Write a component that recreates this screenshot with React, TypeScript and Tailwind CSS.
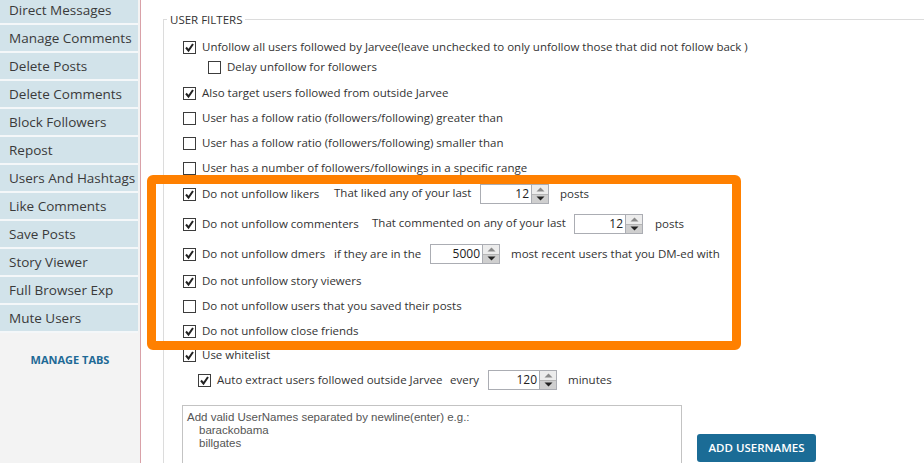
import React from "react";

const tabs = [
  "Direct Messages",
  "Manage Comments",
  "Delete Posts",
  "Delete Comments",
  "Block Followers",
  "Repost",
  "Users And Hashtags",
  "Like Comments",
  "Save Posts",
  "Story Viewer",
  "Full Browser Exp",
  "Mute Users",
];

function Check({ checked }: { checked?: boolean }) {
  return (
    <span className="flex h-[13px] w-[13px] shrink-0 items-center justify-center border border-[#3c3c3c] bg-white">
      {checked && (
        <svg width="11" height="11" viewBox="0 0 11 11">
          <path d="M2 5.5 L4.5 8.5 L9 2" fill="none" stroke="#222" strokeWidth="2" />
        </svg>
      )}
    </span>
  );
}

function CheckRow({
  checked,
  label,
  className = "",
  children,
  labelWidth,
}: {
  checked?: boolean;
  label: string;
  className?: string;
  children?: React.ReactNode;
  labelWidth?: string;
}) {
  return (
    <div className={`flex h-[20px] items-center ${className}`}>
      <div className={`flex shrink-0 items-center gap-[6px] ${labelWidth ?? ""}`}>
        <Check checked={checked} />
        <span className="whitespace-nowrap">{label}</span>
      </div>
      {children}
    </div>
  );
}

function Spin({ value, w = "w-[52px]" }: { value: string; w?: string }) {
  return (
    <div className="flex h-[20px] shrink-0 items-stretch">
      <div className={`${w} flex items-center justify-end border border-[#abadb3] bg-white pr-[2px] text-[12px] text-[#222]`}>
        {value}
      </div>
      <div className="flex w-[17px] flex-col border border-l-0 border-[#abadb3]">
        <div className="flex flex-1 items-center justify-center border-b border-[#b5b5b5] bg-[#ececec]">
          <svg width="9" height="5" viewBox="0 0 9 5">
            <path d="M0.5 4.5 L4.5 0.5 L8.5 4.5 Z" fill="#8a8a8a" />
          </svg>
        </div>
        <div className="flex flex-1 items-center justify-center bg-[#cfcfcf]">
          <svg width="9" height="5" viewBox="0 0 9 5">
            <path d="M0.5 0.5 L4.5 4.5 L8.5 0.5 Z" fill="#222" />
          </svg>
        </div>
      </div>
    </div>
  );
}

export default function App() {
  return (
    <div className="relative flex h-[463px] w-[924px] overflow-hidden bg-white font-['Open_Sans',sans-serif] text-[#333]">
      {/* sidebar */}
      <aside className="flex w-[141px] shrink-0 flex-col border-r border-[#d9a1a8] bg-[#f3f3f3] pr-[2px]">
        <div className="-mt-[3px] flex flex-col">
          {tabs.map((t) => (
            <div
              key={t}
              className="flex h-[28px] items-center border-b-2 border-[#f4f7f9] bg-[#d2e3ea] pl-[9px] text-[13.5px] text-[#3a3a3a]"
            >
              {t}
            </div>
          ))}
        </div>
        <div className="mt-[19px] pl-[2px] text-center text-[11px] font-bold text-[#1e6a96]">MANAGE TABS</div>
      </aside>

      {/* main */}
      <main className="flex-1 pt-[12px] text-[11.5px]">
        <fieldset className="ml-[22px] h-[480px] border-l border-t border-[#dcdcdc] pl-[19px]">
          <legend className="-ml-[16px] px-[3px] text-[11.5px] leading-[15px] text-[#333]">USER FILTERS</legend>

          <CheckRow checked className="mt-[10px]" label="Unfollow all users followed by Jarvee(leave unchecked to only unfollow those that did not follow back )" />
          <CheckRow className="pl-[25px]" label="Delay unfollow for followers" />
          <CheckRow checked className="mt-[6px]" label="Also target users followed from outside Jarvee" />
          <CheckRow className="mt-[5px]" label="User has a follow ratio (followers/following) greater than" />
          <CheckRow className="mt-[5px]" label="User has a follow ratio (followers/following) smaller than" />
          <CheckRow className="mt-[5px]" label="User has a number of followers/followings in a specific range" />

          <CheckRow checked className="mt-[6px]" labelWidth="w-[151px]" label="Do not unfollow likers">
            <span className="-mt-[3px] w-[146px] shrink-0 whitespace-nowrap">That liked any of your last</span>
            <Spin value="12" />
            <span className="ml-[11px]">posts</span>
          </CheckRow>
          <CheckRow checked className="mt-[10px]" labelWidth="w-[189px]" label="Do not unfollow commenters">
            <span className="-mt-[3px] w-[202px] shrink-0 whitespace-nowrap">That commented on any of your last</span>
            <Spin value="12" />
            <span className="ml-[12px]">posts</span>
          </CheckRow>
          <CheckRow checked className="mt-[10px]" labelWidth="w-[151px]" label="Do not unfollow dmers">
            <span className="w-[96px] shrink-0 whitespace-nowrap">if they are in the</span>
            <Spin value="5000" w="w-[53px]" />
            <span className="ml-[11px] whitespace-nowrap">most recent users that you DM-ed with</span>
          </CheckRow>
          <CheckRow checked className="mt-[7px]" label="Do not unfollow story viewers" />
          <CheckRow className="mt-[5px]" label="Do not unfollow users that you saved their posts" />
          <CheckRow checked className="mt-[5px]" label="Do not unfollow close friends" />
          <CheckRow checked className="mt-[4px]" label="Use whitelist" />
          <CheckRow checked className="mt-[5px] pl-[15px]" labelWidth="w-[252px]" label="Auto extract users followed outside Jarvee">
            <span className="w-[38px] shrink-0">every</span>
            <Spin value="120" />
            <span className="ml-[11px]">minutes</span>
          </CheckRow>

          <div className="mt-[15px] flex items-start">
            <div className="-ml-px h-[70px] w-[500px] border border-[#c3c3c3] px-[4px] pt-[5px] font-['Liberation_Sans',sans-serif] text-[11.5px] leading-[13px] text-[#555]">
              <div>Add valid UserNames separated by newline(enter) e.g.:</div>
              <div className="pl-[12px]">barackobama</div>
              <div className="pl-[12px]">billgates</div>
            </div>
            <button className="ml-[15px] mt-[29px] h-[28px] w-[119px] rounded-[3px] bg-[#1b6c96] text-[11.5px] font-semibold text-white">
              ADD USERNAMES
            </button>
          </div>
        </fieldset>
      </main>

      {/* orange highlight annotation */}
      <div className="pointer-events-none absolute left-[147px] top-[175px] h-[175px] w-[594px] rounded-[6px] border-[9px] border-[#ff8000]" />
    </div>
  );
}
